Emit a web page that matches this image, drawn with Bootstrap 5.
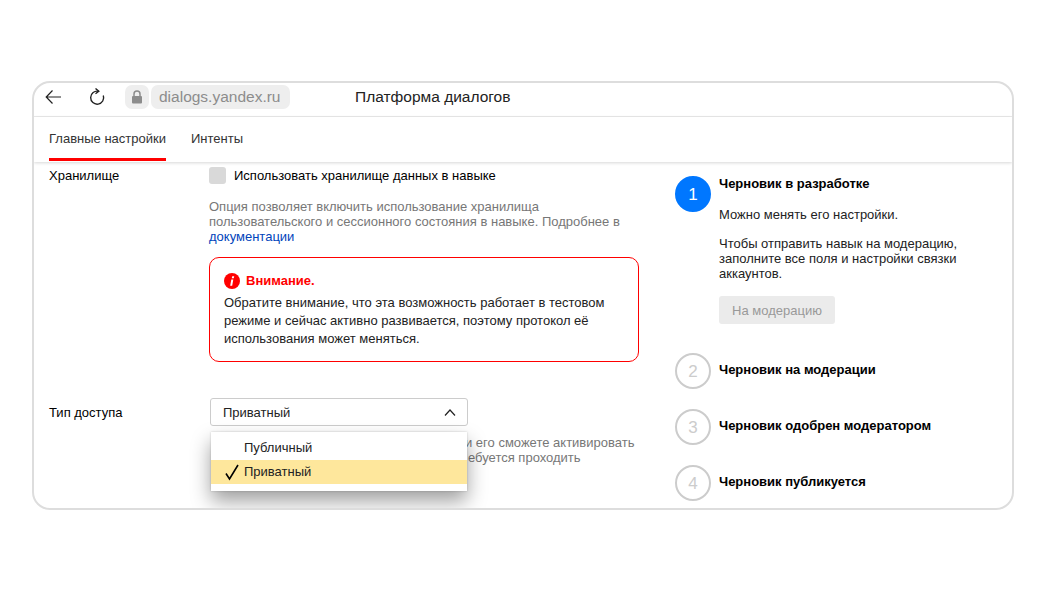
<!DOCTYPE html>
<html lang="ru">
<head>
<meta charset="utf-8">
<title>Платформа диалогов</title>
<link href="https://cdn.jsdelivr.net/npm/bootstrap@5.3.0/dist/css/bootstrap.min.css" rel="stylesheet">
<style>
html,body{height:100%;background:#fff;overflow:hidden}
body{font-family:"Liberation Sans",Arial,sans-serif;font-size:13px;line-height:15px;color:#000;padding:81px 32px 0}
.frame{height:429px;border:2px solid #ddd;border-radius:18px;overflow:hidden;width:982px}
.topbar{height:34px;border-bottom:1px solid #eaeaea;padding-left:10px;padding-bottom:6px}
.backic{width:18px;height:18px;margin-right:26px}
.reloadic{width:18px;height:18px;margin-right:19px}
.lockbox{width:24px;height:24px;background:#eee;border-radius:7px;margin-right:2px}
.urlbox{height:24px;width:139px;background:#eee;border-radius:7px;color:#8c8c8c;font-size:15.500px;padding-left:8px;margin-right:65px}
.apptitle{font-size:15.500px;color:#222}
.tabsbar{height:45px;box-shadow:0 1px 3px rgba(0,0,0,.16);padding-left:15px;position:relative;z-index:2;gap:25px}
.tabitem{height:44px;padding-top:14px;color:#333;border-bottom:3px solid transparent}
.tabitem.on{border-bottom-color:#f00}
.mainarea{padding-left:15px;padding-top:5px}
.leftcol{width:590px;margin-right:36px;flex:none}
.fieldname{width:160px;flex:none;padding-top:1px}
.accessname{padding-top:7px}
.fieldctl{width:430px;flex:none}
.fakecheck{width:17px;height:17px;background:#d9d9d9;border-radius:3px;margin-right:8px}
.hinttext{color:#777;margin-top:15px;margin-bottom:0}
.doclink{color:#04b;text-decoration:none}
.warnbox{border:1px solid #f00;border-radius:10px;margin-top:13px;padding:14px 14px 13px;height:105px;line-height:18px;color:#222}
.warnhead{color:#f00;font-weight:700;margin-bottom:5px;gap:6px;line-height:17px}
.accessrow{margin-top:36px}
.selwrap{width:258px;margin-left:1px;position:relative}
.selbox{height:28px;border:1px solid #ccc;border-radius:3px;padding:0 11px 0 12px;color:#222}
.selmenu{position:absolute;top:34px;left:1px;width:256px;height:59px;background:#fff;box-shadow:0 0 2px rgba(0,0,0,.2),0 10px 20px rgba(0,0,0,.38);padding-top:4px;z-index:3;color:#222}
.optrow{height:24px;padding-left:33px;padding-bottom:2px;position:relative}
.optrow.sel{background:#fee79c}
.tickic{position:absolute;left:13px;top:3px;width:16px;height:18px}
.hintbelow{margin-top:9px;margin-bottom:0;padding-left:256px;color:#777;white-space:nowrap}
.hintsecond{margin-left:3px}
.rightcol{width:300px;padding-top:9px}
.stepnum{width:36px;height:36px;border-radius:50%;flex:none;margin-right:8px;font-size:17px;border:2px solid #ccc;color:#ccc}
.stepnum.cur{background:#07f;border-color:#07f;color:#fff}
.stepgap{margin-bottom:20px}
.steptitle{font-weight:700}
.stepraised{padding-bottom:3px}
.stepbody{margin:14px 0 0;color:#222}
.stepfirst{margin-top:16px}
.modbtn{background:#ebebeb;color:#999;border-radius:3px;width:116px;height:28px;margin-top:15px;margin-bottom:9px}
</style>
</head>
<body>
<div class="frame bg-white">
  <div class="topbar d-flex align-items-center">
    <svg class="backic" viewBox="0 0 18 18" fill="none" stroke="#222" stroke-width="1.200"><path d="M17 9H2.500M8.500 2.500 2.200 9l6.300 6.500"/></svg>
    <svg class="reloadic" viewBox="0 0 18 18" fill="none" stroke="#222" stroke-width="1.400"><path d="M10.500 3.300A6.500 6.500 0 1 0 15.300 7.500"/><path d="M7.500 0.500l3.300 2.800-3.300 2.500"/></svg>
    <div class="lockbox d-flex align-items-center justify-content-center">
      <svg width="12" height="14" viewBox="0 0 12 14"><path d="M3 6V4a3 3 0 0 1 6 0v2" fill="none" stroke="#8c8c8c" stroke-width="1.500"/><rect x="1" y="6" width="10" height="7.500" rx="1" fill="#8c8c8c"/></svg>
    </div>
    <div class="urlbox d-flex align-items-center">dialogs.yandex.ru</div>
    <div class="apptitle">Платформа диалогов</div>
  </div>
  <div class="tabsbar d-flex">
    <div class="tabitem on">Главные настройки</div>
    <div class="tabitem">Интенты</div>
  </div>
  <div class="mainarea d-flex">
    <div class="leftcol">
      <div class="d-flex">
        <div class="fieldname">Хранилище</div>
        <div class="fieldctl">
          <div class="d-flex align-items-center">
            <span class="fakecheck"></span><span>Использовать хранилище данных в навыке</span>
          </div>
          <p class="hinttext">Опция позволяет включить использование хранилища<br>пользовательского и сессионного состояния в навыке. Подробнее в<br><a class="doclink" href="#">документации</a></p>
          <div class="warnbox">
            <div class="warnhead d-flex align-items-center">
              <svg width="16" height="16" viewBox="0 0 16 16"><circle cx="8" cy="8" r="8" fill="#f00"/><path d="M8.200 3.200h2l-.4 2h-2zM7.300 6.500h2L8.200 12.800h-2z" fill="#fff"/></svg>
              <span>Внимание.</span>
            </div>
            Обратите внимание, что эта возможность работает в тестовом<br>режиме и сейчас активно развивается, поэтому протокол её<br>использования может меняться.
          </div>
        </div>
      </div>
      <div class="d-flex accessrow">
        <div class="fieldname accessname">Тип доступа</div>
        <div class="fieldctl">
          <div class="selwrap">
            <div class="selbox d-flex align-items-center justify-content-between">
              <span>Приватный</span>
              <svg width="12" height="7" viewBox="0 0 12 7" fill="none" stroke="#222" stroke-width="1.200"><path d="M1 6.500 6 1l5 5.500"/></svg>
            </div>
            <div class="selmenu">
              <div class="optrow d-flex align-items-center">Публичный</div>
              <div class="optrow sel d-flex align-items-center">
                <svg class="tickic" viewBox="0 0 16 18" fill="none" stroke="#000" stroke-width="1.600"><path d="M2 10.500 5.500 16 14 2"/></svg>
                Приватный
              </div>
            </div>
          </div>
          <p class="hintbelow">и его сможете активировать<br><span class="hintsecond">ебуется проходить</span></p>
        </div>
      </div>
    </div>
    <div class="rightcol">
      <div class="d-flex stepgap">
        <div class="stepnum cur d-flex align-items-center justify-content-center">1</div>
        <div>
          <div class="steptitle">Черновик в разработке</div>
          <p class="stepbody stepfirst">Можно менять его настройки.</p>
          <p class="stepbody">Чтобы отправить навык на модерацию,<br>заполните все поля и настройки связки<br>аккаунтов.</p>
          <div class="modbtn d-flex align-items-center justify-content-center">На модерацию</div>
        </div>
      </div>
      <div class="d-flex stepgap align-items-center">
        <div class="stepnum d-flex align-items-center justify-content-center">2</div>
        <div class="steptitle stepraised">Черновик на модерации</div>
      </div>
      <div class="d-flex stepgap align-items-center">
        <div class="stepnum d-flex align-items-center justify-content-center">3</div>
        <div class="steptitle stepraised">Черновик одобрен модератором</div>
      </div>
      <div class="d-flex stepgap align-items-center">
        <div class="stepnum d-flex align-items-center justify-content-center">4</div>
        <div class="steptitle stepraised">Черновик публикуется</div>
      </div>
    </div>
  </div>
</div>
<script src="https://cdn.jsdelivr.net/npm/bootstrap@5.3.0/dist/js/bootstrap.bundle.min.js"></script>
</body>
</html>
